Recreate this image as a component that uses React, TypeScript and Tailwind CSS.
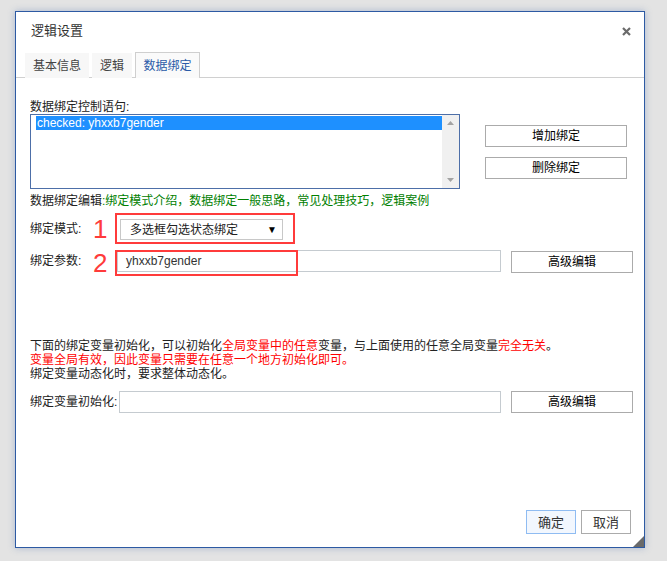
import React from "react";

const font = { fontFamily: '"Liberation Sans", "Noto Sans CJK SC", sans-serif' };

function PlainButton({ label, className = "" }: { label: string; className?: string }) {
  return (
    <button
      type="button"
      className={`h-[22px] border border-[#ababab] bg-white text-[12px] leading-none text-black ${className}`}
    >
      {label}
    </button>
  );
}

function Tab({ label, active, width }: { label: string; active?: boolean; width: string }) {
  if (active) {
    return (
      <div
        className={`${width} h-[26px] -mb-px flex items-center justify-center border border-b-0 border-[#cfcfcf] bg-[#fafafa] text-[12px] text-[#2b5ba8]`}
      >
        {label}
      </div>
    );
  }
  return (
    <div className={`${width} h-[25px] mt-px flex items-center justify-center bg-[#f7f7f7] text-[12px] text-[#444]`}>
      {label}
    </div>
  );
}

export default function App() {
  return (
    <div className="h-[561px] w-full bg-[#e3e3e3] pt-[11px] pl-[15px]" style={font}>
      <div className="relative flex h-[537px] w-[630px] flex-col border border-[#2d5aa3] bg-white shadow-[0_0_7px_rgba(60,100,170,0.35)]">
        {/* header */}
        <div className="flex h-[40px] items-start justify-between pl-[15px] pr-[13px] pt-[10px]">
          <span className="text-[13px] leading-[18px] text-[#333]">逻辑设置</span>
          <svg width="9" height="9" viewBox="0 0 9 9" className="mt-[5px]">
            <path d="M1 1 L8 8 M8 1 L1 8" stroke="#6b6b6b" strokeWidth="2.2" />
          </svg>
        </div>

        {/* tabs */}
        <div className="flex h-[26px] items-start gap-[3px] border-b border-[#d0d0d0] pl-[9px]">
          <Tab label="基本信息" width="w-[64px]" />
          <Tab label="逻辑" width="w-[40px]" />
          <Tab label="数据绑定" width="w-[65px]" active />
        </div>

        {/* content */}
        <div className="flex flex-1 flex-col pl-[14px] pr-[11px] text-[12px] text-[#222]">
          <div className="mt-[22px] leading-[14px]">数据绑定控制语句:</div>

          <div className="flex">
            <div className="flex h-[75px] w-[430px] border border-[#4d6fa8] bg-white">
              <div className="flex-1 pl-[5px] pt-px">
                <div className="h-[14px] bg-[#1e90ff] pl-px text-[12px] leading-[14px] text-white">
                  checked: yhxxb7gender
                </div>
              </div>
              <div className="flex w-[17px] flex-col items-center justify-between bg-[#f0f0f0] py-[6px]">
                <svg width="7" height="4" viewBox="0 0 7 4">
                  <path d="M0 4 L3.5 0 L7 4 Z" fill="#a3a3a3" />
                </svg>
                <svg width="7" height="4" viewBox="0 0 7 4">
                  <path d="M0 0 L7 0 L3.5 4 Z" fill="#a3a3a3" />
                </svg>
              </div>
            </div>
            <div className="ml-[25px] flex flex-col gap-[10px] pt-[11px]">
              <PlainButton label="增加绑定" className="w-[142px]" />
              <PlainButton label="删除绑定" className="w-[142px]" />
            </div>
          </div>

          <div className="mt-[5px] leading-[14px]">
            数据绑定编辑
            <span className="text-[#008000]">:绑定模式介绍，数据绑定一般思路，常见处理技巧，逻辑案例</span>
          </div>

          {/* row 1 */}
          <div className="mt-[5px] flex h-[31px] items-center">
            <span className="w-[63px] leading-[14px]">绑定模式:</span>
            <span className="w-[22px] text-[26px] leading-none text-[#ff3b3b]">1</span>
            <div className="h-[31px] w-[180px] border-2 border-[#ff3b3b] pl-[3px] pt-[4px]">
              <div className="flex h-[21px] w-[163px] items-center justify-between border border-[#c8c8c8] bg-white pl-[9px] pr-[5px]">
                <span className="text-[12px] text-[#222]">多选框勾选状态绑定</span>
                <span className="text-[10px] text-black">▼</span>
              </div>
            </div>
          </div>

          {/* row 2 */}
          <div className="mt-[6px] flex h-[26px] items-start">
            <span className="mt-[4px] w-[63px] leading-[14px]">绑定参数:</span>
            <span className="w-[22px] text-[26px] leading-none text-[#ff3b3b]">2</span>
            <div className="relative flex-1 pl-[2px]">
              <div className="flex h-[22px] items-center border border-[#c5cbd0] bg-white pl-[8px] text-[12px] text-[#333]">
                yhxxb7gender
              </div>
              <div className="pointer-events-none absolute left-0 top-0 h-[26px] w-[183px] border-2 border-[#ff3b3b]" />
            </div>
            <PlainButton label="高级编辑" className="ml-[10px] mt-px w-[122px]" />
          </div>

          {/* notes */}
          <div className="mt-[63px] leading-[14px]">
            <div>
              下面的绑定变量初始化，可以初始化<span className="text-[#ff0000]">全局变量中的任意</span>
              变量，与上面使用的任意全局变量<span className="text-[#ff0000]">完全无关</span>。
            </div>
            <div className="text-[#ff0000]">变量全局有效，因此变量只需要在任意一个地方初始化即可。</div>
            <div>绑定变量动态化时，要求整体动态化。</div>
          </div>

          {/* row 3 */}
          <div className="mt-[10px] flex items-center">
            <span className="leading-[14px]">绑定变量初始化:</span>
            <div className="ml-[2px] h-[22px] flex-1 border border-[#c5cbd0] bg-white" />
            <PlainButton label="高级编辑" className="ml-[10px] w-[122px]" />
          </div>

          <div className="flex-1" />

          {/* footer */}
          <div className="flex justify-end gap-[5px] pb-[13px] pr-[2px]">
            <button
              type="button"
              className="h-[24px] w-[50px] border border-[#8fbcf2] bg-[#f2f7fe] text-[13px] leading-none text-[#333]"
            >
              确定
            </button>
            <button
              type="button"
              className="h-[24px] w-[50px] border border-[#ababab] bg-white text-[13px] leading-none text-[#333]"
            >
              取消
            </button>
          </div>
        </div>

        <svg width="11" height="11" viewBox="0 0 11 11" className="absolute bottom-0 right-0">
          <path d="M11 0 L11 11 L0 11 Z" fill="#6a6a6a" />
        </svg>
      </div>
    </div>
  );
}
